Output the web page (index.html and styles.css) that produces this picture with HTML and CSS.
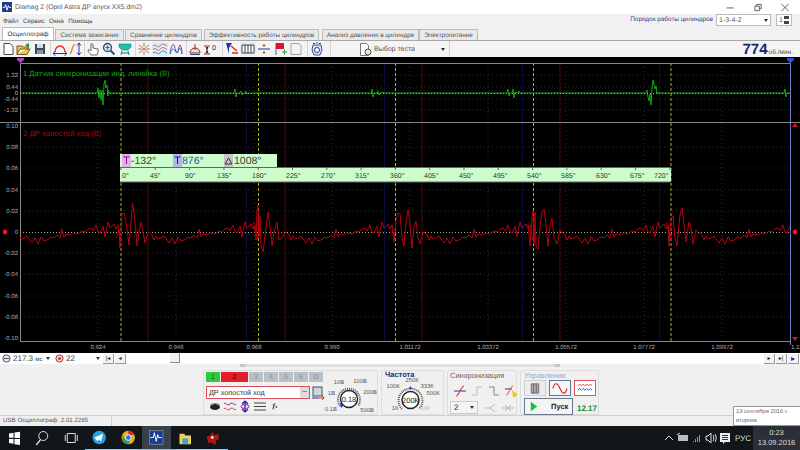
FILE: index.html
```html
<!DOCTYPE html>
<html lang="ru">
<head>
<meta charset="utf-8">
<title>Diamag 2</title>
<link rel="stylesheet" href="styles.css">
</head>
<body>
<div class="app">
  <header class="titlebar">
    <svg class="app-icon" viewBox="0 0 11 11"><rect width="11" height="11" fill="#1b3f8f"/><path d="M1 6h2l1-3 1.500 6 1.500-5 1 2h2" fill="none" stroke="#fff" stroke-width="1"/></svg>
    <span class="title-text">Diamag 2 (Opel Astra ДР впуск XX5.dm2)</span>
    <div class="win-controls">
      <svg viewBox="0 0 10 10"><path d="M0 5.500h8" stroke="#555" fill="none"/></svg>
      <svg viewBox="0 0 10 10"><path d="M1.500 3.500h5v5h-5zM3.500 3.500v-2h5v5h-2" stroke="#555" fill="none"/></svg>
      <svg viewBox="0 0 10 10"><path d="M1 1l8 8M9 1l-8 8" stroke="#555" fill="none"/></svg>
    </div>
  </header>

  <div class="menubar">
    <nav class="menu"><span>Файл</span><span>Сервис</span><span>Окна</span><span>Помощь</span></nav>
    <div class="order">
      <span class="order-label">Порядок работы цилиндров</span>
      <div class="combo order-combo"><span>1-3-4-2</span><i class="arrow"></i></div>
      <div class="combo order-spin"><span>1</span><b class="spin"></b></div>
    </div>
  </div>

  <div class="tabs">
    <span class="tab active t1">Осциллограф</span>
    <span class="tab t2">Система зажигания</span>
    <span class="tab t3">Сравнение цилиндров</span>
    <span class="tab t4">Эффективность работы цилиндров</span>
    <span class="tab t5">Анализ давления в цилиндре</span>
    <span class="tab t6">Электропитание</span>
  </div>

  <div class="toolbar">
    <div class="tgroup g1">
      <svg class="ti" viewBox="0 0 16 14"><path d="M4 1.500h6l3 3v8H4z" fill="#fff" stroke="#444"/></svg>
      <svg class="ti" viewBox="0 0 16 14"><path d="M1 12.500V4h5l1 1h5v2H4l-3 5.500h10l3-5.500H11" fill="#e8c45a" stroke="#7a5a10"/><path d="M9 3l4-2v5z" fill="#2a9a2a"/></svg>
      <svg class="ti" viewBox="0 0 16 14"><rect x="3" y="2" width="10" height="10" fill="#3a4a60"/><rect x="5" y="2" width="6" height="4" fill="#d8dde4"/><rect x="5" y="8" width="6" height="4" fill="#8a94a4"/></svg>
    </div>
    <div class="tgroup g2">
      <svg class="ti" viewBox="0 0 16 14"><path d="M3 10a5 6 0 0 1 10 0" fill="none" stroke="#e03030" stroke-width="1.300"/><path d="M1 11.500h14M1 11.500l2.500-2M1 11.500l2.500 2M15 11.500l-2.500-2M15 11.500l-2.500 2" stroke="#2030c0" fill="none"/></svg>
      <svg class="ti" viewBox="0 0 16 14"><path d="M2 12c2-1 2-9 5-10" fill="none" stroke="#e08020" stroke-width="1.300"/><path d="M11 1v12M11 1l-2 2.500M11 1l2 2.500M11 13l-2-2.500M11 13l2-2.500" stroke="#2030c0" fill="none"/></svg>
    </div>
    <div class="tgroup g3">
      <svg class="ti" viewBox="0 0 16 14"><path d="M6 13c-1-2-3-3-3-5 1-1 2 0 3 1V2c1-1 2 0 2 1v3l5 1v3l-1 3z" fill="#fff" stroke="#444" stroke-width=".8"/></svg>
      <svg class="ti" viewBox="0 0 16 14"><circle cx="6.500" cy="5.500" r="4" fill="#cfe6f8" stroke="#30506a" stroke-width="1.300"/><path d="M9.500 8.500l4 4" stroke="#30506a" stroke-width="2"/><path d="M4.500 5.500h4M6.500 3.500v4" stroke="#2a6a9a"/></svg>
      <svg class="ti" viewBox="0 0 16 14"><path d="M2 2h12v3l-3 3H5L2 5z" fill="#20c0b0" stroke="#108070" stroke-width=".6"/><path d="M5 9l-1 4M11 9l1 4M5 11h6" stroke="#108070" fill="none"/></svg>
    </div>
    <div class="tgroup g4">
      <svg class="ti" viewBox="0 0 16 14"><path d="M8 1v4M8 9v4M2 7h4M10 7h4" stroke="#888" fill="none"/><path d="M3 3l10 8M13 3L3 11" stroke="#d06020" stroke-width=".9" fill="none"/></svg>
      <svg class="ti sel" viewBox="0 0 16 14"><path d="M1 4c3-3 5 3 7 0s4-2 7 0M1 7.500c3-3 5 3 7 0s4-2 7 0" fill="none" stroke="#e06060"/><path d="M1 11c3-3 5 3 7 0s4-2 7 0" fill="none" stroke="#3090c0"/></svg>
      <svg class="ti" viewBox="0 0 16 14"><path d="M2 12C3 4 5 1 6 3s2 8 3 8 2-8 3-8 2 5 2 9" fill="none" stroke="#8040a0"/><path d="M2 12C4 6 5 6 7 9s3 1 4-2 3 3 3 5" fill="none" stroke="#3070d0"/></svg>
    </div>
    <div class="tgroup g5">
      <svg class="ti" viewBox="0 0 16 14"><path d="M3 11a5 5 0 0 1 10 0z" fill="#f4dcd0" stroke="#803030"/><path d="M8 2v6" stroke="#c02020"/><path d="M3 12.500h10" stroke="#3050a0"/></svg>
      <svg class="ti" viewBox="0 0 16 14"><path d="M1 4h6M1 12h6M4 5v6" stroke="#a02020" fill="none"/><path d="M2.500 5h3L4 8zM2.500 11h3L4 8z" fill="#303030"/><text class="ti-text" x="9" y="8">0</text></svg>
    </div>
    <div class="tgroup g6">
      <svg class="ti" viewBox="0 0 16 14"><path d="M2 1h6L5 6v6z" fill="#2030c0"/><path d="M7 4l6 5M8 11h6" stroke="#e02020" stroke-width="1.300" fill="none"/></svg>
      <svg class="ti sel" viewBox="0 0 16 14"><path d="M2 3h12v8H2zM5 3v8M8 3v8M11 3v8" fill="#fff" stroke="#404040"/></svg>
      <svg class="ti" viewBox="0 0 16 14"><path d="M2 7h12" stroke="#2030a0"/><circle cx="8" cy="3.500" r="1.300" fill="#d06020"/><circle cx="8" cy="10.500" r="1.300" fill="#d06020"/></svg>
      <svg class="ti" viewBox="0 0 16 14"><path d="M4 1v12" stroke="#606060"/><path d="M4 1h8v6H4z" fill="#e01030"/><path d="M10 10h5M12.500 7.500v5" stroke="#20a020"/></svg>
      <svg class="ti" viewBox="0 0 16 14"><path d="M3 1.500h8l2 2v9H3z" fill="#f4f4ec" stroke="#a0a0a0"/></svg>
    </div>
    <div class="tgroup g7">
      <svg class="ti" viewBox="0 0 16 14"><path d="M4 3h8l1 5-2 5H5L3 8z" fill="#d8e0f4" stroke="#4050a0"/><circle cx="8" cy="8" r="2.500" fill="#fff" stroke="#304090"/><path d="M4 1.500h2M7 1h2M10 1.500h2" stroke="#304090"/></svg>
    </div>
    <div class="test-select">
      <svg class="test-icon" viewBox="0 0 13 13"><path d="M1.500 .5h6l2 2v10h-8z" fill="#fff" stroke="#777"/><rect x="6" y="6" width="6" height="6" rx="3" fill="#e4e8ec" stroke="#555"/></svg>
      <span>Выбор теста</span><i class="arrow"></i>
    </div>
    <div class="rpm"><b>774</b><span>об./мин.</span></div>
  </div>

  <svg class="scope" viewBox="0 57 800 296">
    <defs>
      <clipPath id="plot2"><rect x="20" y="123" width="770" height="218"/></clipPath>
      <polyline id="tail" points="28,232 31,235 33,240 35,236 37,239 40,238 43,236 46,240 48,243 51,238 54,244 57,237 60,241 63,240 67,237 70,238 73,235 76,238 78,229 80,237 82,234 86,235 90,233 94,234 98,231 101,232 104,229 107,228 109,231 112,225 114,232 116,233 119,226 121,237 122,231 124,222 126,228 128,226 130,224 132,229 134,225 135,232 137,240"/>
    </defs>
    <rect class="bg" x="0" y="57" width="800" height="296"/>

    <path class="grid" d="M98 63V341M176 63V341M254 63V341M332 63V341M410 63V341M488 63V341M566 63V341M644 63V341M722 63V341M20 75H790M20 87H790M20 99H790M20 110H790M20 147H790M20 168H790M20 190H790M20 211H790M20 253H790M20 274H790M20 296H790M20 317H790"/>
    <path class="mark-red" d="M148 63V341M285 63V341M422 63V341M560 63V341"/>
    <path class="mark-blue" d="M246.500 63V341M384.500 63V341M522.500 63V341M659.500 63V341"/>
    <path class="mark-yellow" d="M121 63V341M258.500 63V341M395.500 63V341M533.500 63V341M671 63V341"/>

    <path class="axis" d="M20 63.500H790M0 122.500H800M20 341.500H790M20.500 63V341"/>
    <path class="cursor" d="M790.500 60V345"/>

    <g class="labels">
      <text x="18" y="77" text-anchor="end">1.32</text><text x="18" y="89" text-anchor="end">0.44</text><text x="18" y="95" text-anchor="end">0</text><text x="18" y="101" text-anchor="end">-0.44</text><text x="18" y="112" text-anchor="end">-1.32</text>
      <text x="18" y="128" text-anchor="end">0.10</text><text x="18" y="149" text-anchor="end">0.08</text><text x="18" y="170" text-anchor="end">0.06</text><text x="18" y="192" text-anchor="end">0.04</text><text x="18" y="213" text-anchor="end">0.02</text><text x="18" y="234" text-anchor="end">0</text><text x="18" y="255" text-anchor="end">-0.02</text><text x="18" y="276" text-anchor="end">-0.04</text><text x="18" y="298" text-anchor="end">-0.06</text><text x="18" y="319" text-anchor="end">-0.08</text><text x="18" y="340" text-anchor="end">-0.10</text>
      <text x="98" y="349" text-anchor="middle">0.924</text><text x="176" y="349" text-anchor="middle">0.946</text><text x="254" y="349" text-anchor="middle">0.968</text><text x="332" y="349" text-anchor="middle">0.990</text><text x="410" y="349" text-anchor="middle">1.01172</text><text x="488" y="349" text-anchor="middle">1.03372</text><text x="566" y="349" text-anchor="middle">1.05572</text><text x="644" y="349" text-anchor="middle">1.07772</text><text x="722" y="349" text-anchor="middle">1.09972</text><text x="791" y="349">1.12</text>
    </g>

    <text class="ch1" x="23" y="76">1 Датчик синхронизации инд. линейка (В)</text>
    <text class="ch2" x="23" y="136">2 ДР холостой ход (В)</text>

    <polyline class="wave-g" points="20,93 97,93 98,88 99,98 100,90 101,100 102,90 103,105 104,84 105,80 106,88 107,85 108,96 108.500,90 109,93 234,93 235,89 236,97 237,93 240,93 241,91 242,95 243,93 245,93 246,91 247,94 248,93 371,93 372,89 373,97 374,93 377,93 378,91 379,95 380,93 383,92 384,93 507,93 508,89 509,96 510,93 512,93 513,89 514,98 515,92 518,93 519,91 520,93 646,93 647,90 648,97 649,101 650,94 651,105 652,88 653,80 655,89 656,86 657,94 658,92 659,93 784,93 785,89 786,97 787,93 790,93"/>
    <path class="zero" d="M20 93.500H790M20 232.500H790"/>

    <g clip-path="url(#plot2)">
      <use href="#tail" class="wave-r" x="-16"/>
      <polyline class="wave-r" points="116,238 119,230 120,248 122,214 124,213 126,222 128,236 129,245 131,222 132.500,203 134,212 136,234 137,246 139,232 141,222 143,232 145,243 148,233 149,232"/>
      <use href="#tail" class="wave-r" x="121"/>
      <polyline class="wave-r" points="254,222 256,240 257,212 258,205 259,238 260,216 261,246 263,252 265,236 268,212 270,226 272,246 274,232 277,222 279,240 282,238 285,233 286,232"/>
      <use href="#tail" class="wave-r" x="258"/>
      <polyline class="wave-r" points="392,225 394,242 396,220 398,213 400,214 402,238 404,246 406,222 408,210 410,224 412,248 414,228 416,221 418,238 420,244 423,232 424,233"/>
      <use href="#tail" class="wave-r" x="396"/>
      <polyline class="wave-r" points="528,224 530,246 532,218 533,211 534,244 535,212 536,246 538,249 540,226 542,212 544,209 546,224 548,246 550,226 552,218 554,238 557,244 560,230 562,233"/>
      <use href="#tail" class="wave-r" x="534"/>
      <polyline class="wave-r" points="666,222 668,228 669,246 671,218 673,216 675,238 677,246 680,215 682,208 684,224 686,242 689,222 691,228 693,244 696,230 699,234"/>
      <use href="#tail" class="wave-r" x="671"/>
    </g>

    <g class="ruler">
      <rect class="ruler-bg" x="120" y="154" width="157" height="13"/>
      <rect class="ruler-bg" x="120" y="167" width="551" height="15"/>
      <path class="ruler-line" d="M120 167.500H671M120 182H671"/>
      <path class="ruler-ticks" d="M121 167v3M155.300 167v3M189.600 167v3M223.900 167v3M258.200 167v3M292.500 167v3M326.800 167v3M361.100 167v3M395.400 167v3M429.700 167v3M464 167v3M498.300 167v3M532.600 167v3M566.900 167v3M601.200 167v3M635.500 167v3M669.800 167v3"/>
      <rect x="122" y="154" width="9" height="13" fill="#e4b0e8"/>
      <path d="M123.500 157h6M126.500 157v7" stroke="#801090" stroke-width="1"/>
      <rect x="173" y="154" width="9" height="13" fill="#b4b4f0"/>
      <path d="M174.500 157h6M177.500 157v7" stroke="#1010c0" stroke-width="1"/>
      <rect x="224" y="154" width="9" height="13" fill="#c4c4c4"/>
      <path d="M228.500 158l3.500 6h-7z" fill="none" stroke="#303030"/>
      <text class="deg" x="131" y="164">-132°</text>
      <text class="deg blue" x="182" y="164">876°</text>
      <text class="deg" x="234" y="164">1008°</text>
      <g class="rlabels">
        <text x="122" y="178">0°</text><text x="150" y="178">45°</text><text x="185" y="178">90°</text><text x="217" y="178">135°</text><text x="252" y="178">180°</text><text x="286" y="178">225°</text><text x="321" y="178">270°</text><text x="355" y="178">315°</text><text x="390" y="178">360°</text><text x="424" y="178">405°</text><text x="459" y="178">450°</text><text x="493" y="178">495°</text><text x="527" y="178">540°</text><text x="561" y="178">585°</text><text x="596" y="178">630°</text><text x="630" y="178">675°</text><text x="654" y="178">720°</text>
      </g>
    </g>

    <path d="M17 58h7v2l-3.500 3-3.500-3z" fill="#b040c0"/>
    <path d="M787 58h7v2l-3.500 3-3.500-3z" fill="#3050e0"/>
    <path d="M792 127l3-4 3 4zM792 337h6l-3 4z" fill="#e01020"/>
    <circle cx="5" cy="232" r="2.400" fill="#f01030"/>
    <circle cx="795" cy="232" r="2.400" fill="#f01030"/>
  </svg>

  <div class="nav-row">
    <svg class="nav-icon" viewBox="0 0 10 10"><circle cx="5" cy="5" r="4" fill="#e4e8f0" stroke="#404060"/><path d="M2 5h6" stroke="#404060"/></svg>
    <span class="nav-value">217.3 <small>мс</small></span><i class="arrow"></i>
    <svg class="nav-icon icon2" viewBox="0 0 10 10"><circle cx="5" cy="5" r="4" fill="#f4d8d8" stroke="#a02020"/><circle cx="5" cy="5" r="1.500" fill="#a02020"/></svg>
    <span class="nav-value v2">22</span><i class="arrow"></i>
    <span class="nav-btn b1">|◂</span><span class="nav-btn">◂</span>
    <span class="thumb"></span>
    <div class="nav-right"><span class="nav-btn">▸</span><span class="nav-btn">▸|</span><span class="nav-btn play">▸</span></div>
  </div>

  <div class="control-area">
    <div class="hscroll"><i></i><i class="end"></i></div>
    <div class="panels">
      <section class="group g-channel">
        <div class="channel-left">
          <div class="ch-buttons">
            <span class="ch on-g">1</span><span class="ch on-r">2</span><span class="ch">3</span><span class="ch">4</span><span class="ch">5</span><span class="ch">6</span><span class="ch">D</span>
          </div>
          <div class="ch-name">
            <div class="ch-input"><span>ДР холостой ход</span><b>...</b></div>
            <svg class="ch-swap" viewBox="0 0 14 14"><rect x="2" y="1" width="9" height="9" fill="#cfd8dc" stroke="#405060"/><path d="M1 12h6" stroke="#2030c0"/><path d="M7 12h6M11 9l2 3-2 2" stroke="#e02020" fill="none"/></svg>
          </div>
          <div class="ch-tools">
            <svg viewBox="0 0 14 13"><ellipse cx="7" cy="7" rx="5" ry="3" fill="#222"/><path d="M2 5c3-2 7-2 10 0" stroke="#888" fill="none"/></svg>
            <svg viewBox="0 0 14 13"><path d="M1 4c2-3 3 3 6 0s3 2 6 0" fill="none" stroke="#8030a0"/><path d="M1 9c2-3 3 3 6 0s3 2 6 0" fill="none" stroke="#d04040"/></svg>
            <svg viewBox="0 0 14 13"><path d="M7 1v11M7 1L4 4M7 1l3 3M7 12L4 9M7 12l3-3" stroke="#2020c0" stroke-width="1.300" fill="none"/><ellipse cx="7" cy="6.500" rx="4" ry="2" fill="none" stroke="#a02090"/></svg>
            <svg viewBox="0 0 14 13"><path d="M1 3h12M1 6.500h12M1 10h12" stroke="#444" fill="none"/></svg>
            <span class="fx">f<small>x</small></span>
          </div>
        </div>
        <svg class="knob" viewBox="0 0 54 48">
          <g class="knob-labels">
            <text x="14" y="17" text-anchor="middle">10В</text><text x="35" y="16" text-anchor="middle">100В</text><text x="6.500" y="28" text-anchor="middle">1В</text><text x="45" y="27" text-anchor="middle">200В</text><text x="6" y="44" text-anchor="middle">0.1В</text><text x="42" y="45" text-anchor="middle">500В</text>
          </g>
          <path class="knob-ring" d="M15 39a11 11 0 1 1 18 0"/>
          <circle class="knob-face" cx="24" cy="32" r="8.500"/>
          <text class="knob-val" x="24" y="35" text-anchor="middle">0.18</text>
          <path d="M15 36l4 2-3 3z" fill="#2030e0"/>
        </svg>
      </section>

      <section class="group g-freq">
        <h3 class="freq-title">Частота</h3>
        <svg class="knob freq" viewBox="0 0 64 38">
          <g class="knob-labels">
            <text x="12" y="12" text-anchor="middle">100К</text><text x="31" y="6" text-anchor="middle">250К</text><text x="46" y="12" text-anchor="middle">333К</text><text x="52" y="19" text-anchor="middle">500К</text><text x="14" y="34" text-anchor="middle">1К</text><text class="dim" x="44" y="34" text-anchor="middle">1М</text>
          </g>
          <path class="knob-ring" d="M21 33a12 12 0 1 1 17 0"/>
          <circle class="knob-face" cx="29.500" cy="24" r="8.500"/>
          <text class="knob-val" x="29.500" y="27" text-anchor="middle">200К</text>
          <path d="M28 13h3l-1.500-3z" fill="#2030e0"/>
        </svg>
      </section>

      <section class="group g-sync">
        <h3 class="sync-title">Синхронизация</h3>
        <div class="sync-row">
          <svg viewBox="0 0 14 12"><path d="M1 6h12" stroke="#2030c0"/><path d="M3 11c3 0 5-10 8-10" stroke="#e04040" fill="none" stroke-width="1.200"/></svg>
          <svg viewBox="0 0 14 12"><path d="M2 10h5V2h5" stroke="#b8bcc0" fill="none"/></svg>
          <svg viewBox="0 0 14 12"><path d="M2 2h5v8h5" stroke="#808488" fill="none"/></svg>
          <svg viewBox="0 0 14 12"><path d="M1 4h7" stroke="#2030c0"/><path d="M2 10c3 0 4-9 7-9" stroke="#e04040" fill="none"/><path d="M8 5l5 4-2 3h-2z" fill="#f0c020"/></svg>
        </div>
        <div class="sync-row2">
          <div class="sync-combo"><span>2</span><i class="arrow"></i></div>
          <svg viewBox="0 0 14 12"><path d="M1 6h5l5-4M6 6l5 4" stroke="#b0b8bc" fill="none"/></svg>
          <svg viewBox="0 0 14 12"><path d="M1 6h12M4 3l3 3-3 3M10 3L7 6l3 3" stroke="#b0b8bc" fill="none"/></svg>
        </div>
      </section>

      <section class="group g-run">
        <h3 class="run-title">Управление</h3>
        <div class="run-top">
          <span class="rbtn"><svg viewBox="0 0 14 14"><path d="M3 2h8v10H3zM5.500 2v10M8.500 2v10" fill="#a8a8a8" stroke="#707070"/></svg></span>
          <span class="rbtn blue"><svg viewBox="0 0 18 14"><path d="M1 7c2-7 5-7 8 0s6 7 8 0" fill="none" stroke="#d82020" stroke-width="1.200"/></svg></span>
          <span class="rbtn red"><svg viewBox="0 0 18 14"><path d="M1 4l2-2 2 2 2-2 2 2 2-2 2 2 2-2 2 2" fill="none" stroke="#d03020"/><path d="M1 9l2-2 2 2 2-2 2 2 2-2 2 2 2-2 2 2" fill="none" stroke="#3030c0"/></svg></span>
        </div>
        <div class="run-bottom">
          <span class="start"><svg viewBox="0 0 10 14"><path d="M1 1l8 6-8 6z" fill="#10c040"/></svg><b>Пуск</b></span>
          <span class="timer">12.17</span>
        </div>
      </section>
    </div>
  </div>

  <footer class="statusbar"><span class="status-text">USB Осциллограф &nbsp;2.01.2265</span></footer>

  <div class="taskbar">
    <svg class="tb win" viewBox="0 0 28 24"><path d="M9 7.500l4.500-.7v5H9zM14.500 6.600l5.500-.8v6.200h-5.500zM9 13h4.500v4.800L9 17zM14.500 13H20v6l-5.500-.8z" fill="#fff"/></svg>
    <svg class="tb" viewBox="0 0 28 24"><circle cx="15" cy="10" r="4.500" fill="none" stroke="#ddd"/><path d="M12 14l-4 5" stroke="#ddd" stroke-width="1.300"/></svg>
    <svg class="tb" viewBox="0 0 28 24"><path d="M10 7.500h8v9h-8zM8 9v6M20 9v6" fill="none" stroke="#ddd"/></svg>
    <svg class="tb app-on" viewBox="0 0 28 24"><circle cx="14" cy="12" r="7" fill="#2aa0dc"/><path d="M9 12l9-4-2 8-3-2-1 2z" fill="#fff"/></svg>
    <svg class="tb app-on" viewBox="0 0 28 24"><circle cx="14" cy="12" r="7" fill="#e0b020"/><path d="M14 5a7 7 0 0 1 6.500 4.500H14zM8 8.500L11 15a7 7 0 0 1-3-6.500z" fill="#d83020"/><path d="M7.500 13a7 7 0 0 0 6.500 6l3-6z" fill="#30a040"/><circle cx="14" cy="12" r="3" fill="#3070e0" stroke="#fff"/></svg>
    <svg class="tb app-active" viewBox="0 0 28 24"><rect x="7" y="5" width="14" height="14" fill="#1c3c90" stroke="#90a8e0" stroke-width=".6"/><path d="M8 12h3l1-5 2 9 1.500-7 1 3h3" fill="none" stroke="#fff"/></svg>
    <svg class="tb app-on" viewBox="0 0 28 24"><path d="M8 8h5l1 2h6v9H8z" fill="#f0d060"/><rect x="11" y="13" width="6" height="6" fill="#30a8d0"/></svg>
    <svg class="tb app-on" viewBox="0 0 28 24"><path d="M7 11l4-1 2-4 2 4 4-2 1 5-3 2-1 5-4-3-3 1z" fill="#b01818"/><circle cx="13" cy="12" r="1.500" fill="#f0e0e0"/></svg>
    <div class="tray">
      <svg viewBox="0 0 14 24"><path d="M3 14l4-4 4 4" fill="none" stroke="#ddd"/></svg>
      <svg viewBox="0 0 14 24"><rect x="2" y="9" width="10" height="6" fill="#bbb"/><path d="M1 9l3-2" stroke="#ddd"/></svg>
      <svg viewBox="0 0 14 24"><path d="M3 16h1v-1H3zM5 16h1v-3H5zM7 16h1v-5H7zM9 16h1v-7H9z" fill="#999"/></svg>
      <svg viewBox="0 0 14 24"><path d="M2 10h2l3-3v10l-3-3H2z" fill="none" stroke="#ddd"/><path d="M9 9c1 2 1 4 0 6M11 8c1.500 2.500 1.500 5.500 0 8" fill="none" stroke="#ddd"/></svg>
      <svg viewBox="0 0 14 24"><path d="M2 7h10v9H7l-2 2v-2H2z" fill="#eee"/><path d="M4 9.500h6M4 11.500h6M4 13.500h6" stroke="#333"/></svg>
      <span class="lang">РУС</span>
      <div class="clock"><span>0:23</span><span>13.09.2016</span></div>
    </div>
  </div>

  <div class="tooltip">13 сентября 2016 г.<br>вторник</div>
</div>
</body>
</html>
```
FILE: styles.css
```css
* { box-sizing: border-box; }
html, body { margin: 0; padding: 0; }
body { width: 800px; height: 450px; overflow: hidden; font-family: "Liberation Sans", Arial, sans-serif; font-size: 7.5px; color: #333; background: #f0f0f0; text-rendering: geometricPrecision; }
.app { position: relative; width: 800px; height: 450px; display: flex; flex-direction: column; }

.titlebar { height: 14px; background: #fff; display: flex; align-items: center; padding-left: 2px; flex: none; }
.app-icon { width: 10px; height: 10px; }
.title-text { margin-left: 3px; font-size: 6.800px; color: #555; }
.win-controls { margin-left: auto; display: flex; gap: 17px; padding-right: 10px; }
.win-controls svg { width: 10px; height: 9px; }

.menubar { height: 14px; flex: none; background: #f1f1f1; display: flex; align-items: center; justify-content: space-between; }
.menu { display: flex; gap: 4.500px; padding-left: 3px; color: #444; font-size: 6.300px; }
.order { display: flex; align-items: flex-start; padding-right: 8px; height: 14px; }
.order-label { color: #33438e; font-size: 6.400px; margin: 2px 3px 0 0; }
.combo { height: 12px; background: #fff; border: 1px solid #bbb; display: flex; align-items: center; justify-content: space-between; padding: 0 2px; font-size: 7px; color: #555; }
.order-combo { width: 55px; }
.order-spin { width: 16px; margin-left: 5px; }
.spin { width: 5px; height: 8px; background: linear-gradient(#444 0 35%, transparent 35% 65%, #444 65%); }
.arrow { display: inline-block; width: 0; height: 0; border: 2.500px solid transparent; border-top: 3px solid #333; border-bottom: 0; flex: none; }

.tabs { height: 13px; flex: none; display: flex; background: #f1f1f1; align-items: flex-end; border-bottom: 1px solid #a8a8a8; padding-left: 2px; }
.tab { height: 11px; display: flex; align-items: center; justify-content: center; background: #e9e9e9; border: 1px solid #bcbcbc; border-bottom: 0; color: #555; font-size: 6.400px; margin-right: 1px; flex: none; white-space: nowrap; overflow: hidden; }
.tab.active { height: 13px; background: #fff; color: #333; }
.t1 { width: 52px; }
.t2 { width: 69px; }
.t3 { width: 77px; }
.t4 { width: 115px; margin-left: 1px; }
.t5 { width: 97px; margin-left: 2px; margin-right: 0; }
.t6 { width: 59px; }

.toolbar { height: 16px; flex: none; background: #f4f4f4; display: flex; align-items: center; }
.tgroup { display: flex; height: 16px; align-items: center; border-right: 1px solid #d4d4d4; flex: none; }
.g1 { width: 51px; }
.g2 { width: 34px; padding-left: 1px; }
.g3 { width: 51px; }
.g4 { width: 51px; }
.g5 { width: 36px; }
.g6 { width: 85px; padding-left: 1px; }
.g7 { width: 23px; padding-left: 1px; }
.ti { width: 16px; height: 14px; flex: none; }
.ti.sel { background: #e0ecf8; }
.ti-text { font-size: 7px; fill: #222; }
.test-select { width: 119px; height: 16px; display: flex; align-items: center; border-right: 1px solid #d4d4d4; padding-left: 28px; color: #555; font-size: 7px; flex: none; }
.test-icon { width: 13px; height: 13px; margin-right: 2px; flex: none; }
.test-select .arrow { margin-left: auto; margin-right: 4px; }
.rpm { margin-left: auto; padding-right: 7px; display: flex; align-items: baseline; gap: 1px; color: #555; font-size: 6.500px; }
.rpm b { font-size: 15px; color: #1a2470; }

.scope { display: block; width: 800px; height: 296px; flex: none; }
.bg { fill: #000; }
.grid { fill: none; stroke: #2a2a2a; stroke-width: 1; stroke-dasharray: 1 3; }
.mark-red { fill: none; stroke: #4a0a0a; }
.mark-blue { fill: none; stroke: #0c0c3c; }
.mark-yellow { fill: none; stroke: #b0b020; stroke-dasharray: 3 2; }
.axis { fill: none; stroke: #888; }
.cursor { fill: none; stroke: #7078c8; stroke-width: 1; }
.labels text { font-size: 6px; fill: #b0b0b0; }
.ch1 { font-size: 7.600px; fill: #0fa80f; }
.ch2 { font-size: 7.700px; fill: #b80000; }
.wave-g { fill: none; stroke: #0fa80f; stroke-width: 1; }
.wave-r { fill: none; stroke: #b80010; stroke-width: 1; }
.zero { fill: none; stroke: #a8a898; stroke-dasharray: 1 2; stroke-width: 1; }
.ruler-bg { fill: #ccfccc; }
.ruler-line { fill: none; stroke: #666; }
.ruler-ticks { fill: none; stroke: #666; }
.deg { font-size: 10.500px; fill: #404040; }
.deg.blue { fill: #2060b0; }
.rlabels text { font-size: 7px; fill: #333; }

.nav-row { position: relative; height: 11px; flex: none; background: #fff; display: flex; align-items: center; padding-left: 2px; }
.nav-icon { width: 9px; height: 9px; flex: none; }
.nav-row .arrow { margin-left: 4px; }
.nav-value { margin-left: 2px; font-size: 8px; width: 29px; color: #444; white-space: nowrap; }
.nav-value small { font-size: 6px; }
.icon2 { margin-left: 5px; }
.v2 { width: 26px; }
.nav-btn { width: 11px; height: 10px; display: flex; align-items: center; justify-content: center; background: #f2f2f2; border-bottom: 1px solid #999; border-right: 1px solid #999; font-size: 6px; color: #222; margin-left: 1px; }
.b1 { margin-left: 3px; }
.thumb { position: absolute; left: 170px; top: 0; width: 10px; height: 10px; background: #f0f0f0; border-right: 1px solid #888; border-bottom: 1px solid #888; }
.nav-right { margin-left: auto; display: flex; padding-right: 1px; }
.nav-btn.play { color: #1020d0; font-size: 8px; }

.control-area { height: 51px; flex: none; background: #f0f0f0; display: flex; flex-direction: column; }
.hscroll { width: 320px; height: 3px; margin-left: 240px; margin-top: 0; background: #dde0e4; display: flex; justify-content: space-between; flex: none; }
.hscroll i { width: 5px; background: #c4c8cc; }
.panels { display: flex; margin: 3px 0 0 203px; gap: 3px; height: 45px; }
.group { position: relative; border: 1px solid #dedede; border-radius: 2px; flex: none; margin: 0; }
.group h3 { margin: 0; font-size: 7.500px; font-weight: normal; }

.g-channel { width: 175px; display: flex; padding: 1px 0 0 2px; }
.channel-left { width: 119px; flex: none; display: flex; flex-direction: column; }
.ch-buttons { display: flex; height: 10px; gap: 1px; }
.ch { width: 14px; display: flex; align-items: center; justify-content: center; background: #b8c0c8; color: #8a9298; font-size: 7px; }
.on-g { background: #30c840; color: #0a5a10; }
.on-r { width: 27px; background: #e81c28; color: #701010; font-weight: bold; }
.ch-name { display: flex; align-items: center; margin-top: 4px; height: 13px; }
.ch-input { width: 104px; height: 13px; border: 1px solid #d85060; background: #fff; display: flex; align-items: center; justify-content: space-between; padding-left: 2px; font-size: 7.200px; color: #333; }
.ch-input b { width: 9px; height: 11px; background: #dcdcdc; font-size: 6px; text-align: center; line-height: 8px; }
.ch-swap { width: 14px; height: 14px; margin-left: 1px; }
.ch-tools { display: flex; gap: 1px; margin-top: 1px; padding-left: 2px; }
.ch-tools svg { width: 14px; height: 13px; }
.fx { width: 14px; font: italic bold 7px "Liberation Serif", serif; text-align: center; line-height: 13px; color: #222; }
.fx small { font-size: 5px; }
.knob { flex: none; width: 54px; height: 48px; margin-top: -5px; overflow: visible; }
.knob-labels text { font-size: 5.800px; fill: #555; }
.knob-labels .dim { fill: #bbb; }
.knob-ring { fill: none; stroke: #555; stroke-width: 2; stroke-dasharray: 1 1; }
.knob-face { fill: #fff; stroke: #222; stroke-width: 1.400; }
.knob-val { font-size: 7.500px; fill: #222; }

.g-freq { width: 63px; padding: 0 0 0 3px; }
.freq-title { color: #1a2a80; font-weight: bold !important; line-height: 7px; margin-top: 0 !important; }
.knob.freq { width: 64px; height: 38px; margin: -2px 0 0 -4.500px; display: block; }

.g-sync { width: 70px; padding: 0 0 0 2px; }
.sync-title { color: #666; line-height: 9px; }
.sync-row { display: flex; gap: 3px; margin-top: 5px; padding-left: 3px; }
.sync-row svg, .sync-row2 svg { width: 14px; height: 12px; flex: none; }
.sync-row2 { display: flex; align-items: center; gap: 3px; margin-top: 4px; }
.sync-combo { width: 28px; height: 13px; border: 1px solid #ccc; background: #f4f4f4; display: flex; align-items: center; justify-content: space-between; padding: 0 3px; font-size: 8px; margin-right: 3px; }

.g-run { width: 79px; padding: 0 0 0 3px; }
.run-title { color: #9aa8c0; line-height: 9px; }
.run-top { display: flex; gap: 3px; height: 16px; margin-top: 0; }
.rbtn { width: 22px; height: 16px; display: flex; align-items: center; justify-content: center; background: #ececec; border: 1px solid #d0d0d0; }
.rbtn svg { width: 16px; height: 13px; }
.rbtn.blue { border-color: #5a7a98; background: #f6f6f6; }
.rbtn.red { border-color: #e05060; background: #fff; }
.run-bottom { display: flex; align-items: flex-end; gap: 4px; margin-top: 2px; }
.start { width: 49px; height: 17px; display: flex; align-items: center; border: 1px solid #6a7a88; background: #f4f4f4; padding-left: 5px; flex: none; }
.start svg { width: 8px; height: 13px; }
.start b { font-size: 7.500px; margin-left: 13px; color: #222; }
.timer { color: #1a8a3a; font-size: 8px; font-weight: bold; line-height: 12px; }

.statusbar { height: 11px; flex: none; background: #f0f0f0; border-top: 1px solid #d0d0d0; font-size: 6.200px; color: #555; padding-left: 3px; line-height: 10px; }
.status-text { display: inline-block; width: 109px; height: 10px; border-right: 1px solid #d0d0d0; }

.taskbar { flex: 1; background: #11161b; display: flex; align-items: stretch; }
.tb { width: 28.500px; height: 24px; flex: none; box-sizing: border-box; }
.win { width: 28px; }
.app-on { border-bottom: 1px solid #8ac4ee; }
.app-active { background: #3a4046; border-bottom: 1px solid #8ac4ee; }
.tray { margin-left: auto; display: flex; align-items: center; height: 24px; color: #ddd; }
.tray svg { width: 14px; height: 24px; }
.lang { font-size: 8px; margin: 0 2px 0 3px; }
.clock { width: 47px; height: 24px; background: #2a3036; display: flex; flex-direction: column; align-items: center; justify-content: center; font-size: 7.500px; line-height: 10px; }

.tooltip { position: absolute; left: 733px; top: 406px; width: 67px; height: 20px; background: #fff; border: 1px solid #999; border-right: 0; padding: 1px 2px; font-size: 5.800px; line-height: 9px; color: #666; white-space: nowrap; overflow: hidden; }
```
